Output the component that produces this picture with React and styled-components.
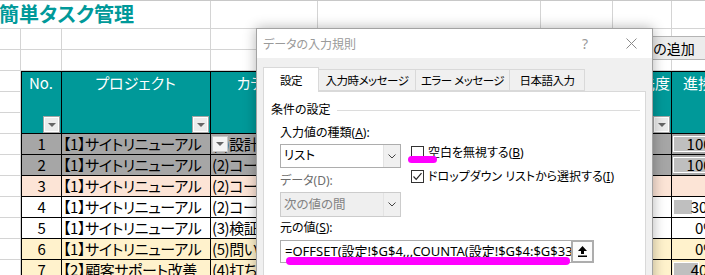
import React from "react";
import styled, { createGlobalStyle } from "styled-components";

const teal = "#009999";
const grid = "#d4d4d4";
const font = `"Noto Sans CJK JP", "Noto Sans", sans-serif`;
const uiFont = `"Noto Sans", "Noto Sans CJK JP", sans-serif`;

const columns = [21, 41, 149, 107, 223, 72, 59, 69];
const headers = ["No.", "プロジェクト", "カテゴリ", "タスク", "担当", "優先度", "進捗率"];

const rows = [
  { no: 1, project: "【1】サイトリニューアル", task: "(1)設計書作成", tone: "done", progress: 100 },
  { no: 2, project: "【1】サイトリニューアル", task: "(2)コーディング", tone: "done", progress: 100 },
  { no: 3, project: "【1】サイトリニューアル", task: "(2)コーディング", tone: "late", progress: null },
  { no: 4, project: "【1】サイトリニューアル", task: "(2)コーディング", tone: "plain", progress: 30 },
  { no: 5, project: "【1】サイトリニューアル", task: "(3)検証", tone: "plain", progress: 0 },
  { no: 6, project: "【1】サイトリニューアル", task: "(5)問い合わせ対応", tone: "wait", progress: 0 },
  { no: 7, project: "【2】顧客サポート改善", task: "(4)打ち合わせ", tone: "wait", progress: 40 },
];

const toneColor = {
  done: "#a6a6a6",
  late: "#fce4d6",
  plain: "#ffffff",
  wait: "#fff2cc",
};

const GlobalStyle = createGlobalStyle`
  body {
    margin: 0;
    background: #fff;
    overflow: hidden;
  }
`;

const Page = styled.div`
  position: relative;
  width: 705px;
  height: 275px;
  overflow: hidden;
  font-family: ${font};
  font-feature-settings: "palt";
`;

const Sheet = styled.div`
  display: flex;
  flex-direction: column;
  border-top: 1px solid #c8c8c8;
`;

const Row = styled.div`
  display: flex;
  flex: none;
  height: ${(p) => p.h}px;
`;

const GridCell = styled.div`
  flex: none;
  box-sizing: border-box;
  width: ${(p) => p.w}px;
  height: ${(p) => p.h || 21}px;
  border-right: 1px solid ${grid};
  border-bottom: 1px solid ${grid};
`;

const Stack = styled.div`
  display: flex;
  flex-direction: column;
`;

const TitleCell = styled.div`
  flex: none;
  box-sizing: border-box;
  width: 211px;
  height: 28px;
  border-right: 1px solid ${grid};
  border-bottom: 1px solid ${grid};
  color: ${teal};
  font-size: 20px;
  font-weight: 700;
  line-height: 26px;
  white-space: nowrap;
  overflow: hidden;
  text-indent: -1px;
`;

const HeadCell = styled.div`
  flex: none;
  box-sizing: border-box;
  width: ${(p) => p.w}px;
  height: 63px;
  display: flex;
  flex-direction: column;
  padding: 1px 1px 0 0;
  background: ${teal};
  color: #fff;
  font-size: 15px;
  line-height: 20px;
  text-align: ${(p) => p.align || "center"};
  white-space: nowrap;
  overflow: hidden;
  border-top: 1px solid #000;
  border-right: 1px solid #000;
  border-bottom: 1px solid #000;
  border-left: ${(p) => (p.first ? "1px solid #000" : "none")};
`;

const FilterButton = styled.span`
  margin-top: auto;
  align-self: flex-end;
  box-sizing: border-box;
  width: 17px;
  height: 17px;
  display: flex;
  align-items: center;
  justify-content: center;
  background: #ececec;
  border: 1px solid #a5a5a5;
  box-shadow: inset 0 0 0 1px #fff;
`;

const Caret = styled.span`
  width: 0;
  height: 0;
  border-left: 4px solid transparent;
  border-right: 4px solid transparent;
  border-top: 4px solid #666;
`;

const DataCell = styled.div`
  flex: none;
  position: relative;
  box-sizing: border-box;
  width: ${(p) => p.w}px;
  height: 21px;
  padding: 0 1px;
  background: ${(p) => p.bg};
  border-right: 1px solid #000;
  border-bottom: 1px solid #000;
  border-left: ${(p) => (p.first ? "1px solid #000" : "none")};
  color: #000;
  font-size: 15px;
  letter-spacing: -0.4px;
  line-height: 20px;
  text-align: ${(p) => p.align || "left"};
  white-space: nowrap;
  overflow: hidden;
`;

const ListButton = styled.span`
  position: absolute;
  left: 1px;
  top: 2px;
  box-sizing: border-box;
  width: 16px;
  height: 16px;
  display: flex;
  align-items: center;
  justify-content: center;
  background: #f4f4f4;
  border: 1px solid #c6c6c6;
`;

const Bar = styled.span`
  position: absolute;
  left: 1px;
  top: 2px;
  height: 16px;
  box-sizing: border-box;
  background: #bfbfbf;
  border: 1px solid #fff;
`;

const BarText = styled.span`
  position: relative;
  letter-spacing: 0;
`;

const ShapeButton = styled.div`
  position: absolute;
  left: 614px;
  top: 36px;
  box-sizing: border-box;
  width: 100px;
  height: 24px;
  display: flex;
  align-items: center;
  justify-content: center;
  padding-left: 6px;
  background: #ececec;
  border: 1px solid #b4b4b4;
  font-size: 14px;
  color: #000;
`;

/* dialog */

const Dialog = styled.div`
  position: absolute;
  left: 256px;
  top: 28px;
  box-sizing: border-box;
  width: 397px;
  height: 270px;
  background: #f0f0f0;
  border: 1px solid #a3a3a3;
  box-shadow: 0 0 12px rgba(0, 0, 0, 0.3);
  font-family: ${uiFont};
  font-size: 12px;
  color: #000;
`;

const TitleBar = styled.div`
  display: flex;
  align-items: center;
  height: 29px;
  padding-left: 6px;
  background: #fff;
  color: #9a9a9a;
`;

const TitleText = styled.span`
  flex: 1;
  font-size: 12px;
`;

const WinButton = styled.span`
  width: ${(p) => p.w}px;
  height: 29px;
  display: flex;
  align-items: center;
  justify-content: center;
  color: #9a9a9a;
  font-size: 14px;
`;

const Body = styled.div`
  padding: 9px 6px 0 6px;
`;

const Tabs = styled.div`
  position: relative;
  z-index: 1;
  display: flex;
  align-items: flex-end;
  height: 24px;
`;

const Tab = styled.div`
  box-sizing: border-box;
  width: ${(p) => p.w}px;
  height: ${(p) => (p.active ? 25 : 22)}px;
  margin-left: ${(p) => (p.first ? 0 : -1)}px;
  margin-bottom: ${(p) => (p.active ? -1 : 0)}px;
  display: flex;
  align-items: center;
  justify-content: center;
  background: ${(p) => (p.active ? "#fff" : "#f0f0f0")};
  border: 1px solid #d9d9d9;
  border-bottom: ${(p) => (p.active ? "none" : "1px solid #d9d9d9")};
  font-size: 11.5px;
  letter-spacing: -0.5px;
  white-space: nowrap;
`;

const Panel = styled.div`
  box-sizing: border-box;
  height: 200px;
  padding: 9px 0 0 7px;
  background: #fff;
  border: 1px solid #d9d9d9;
`;

const SectionHead = styled.div`
  display: flex;
  align-items: center;
  gap: 6px;
  line-height: 18px;
  padding-right: 5px;
`;

const Rule = styled.span`
  flex: 1;
  height: 1px;
  background: #dcdcdc;
`;

const Fields = styled.div`
  padding-left: 9px;
`;

const FieldLabel = styled.div`
  line-height: 18px;
  margin-top: ${(p) => p.gap}px;
  color: ${(p) => (p.disabled ? "#6d6d6d" : "#000")};
`;

const TopRow = styled.div`
  display: flex;
  gap: 10px;
  margin-top: 2px;
`;

const LeftColumn = styled.div`
  width: 121px;
`;

const Select = styled.div`
  box-sizing: border-box;
  display: flex;
  height: ${(p) => (p.disabled ? 25 : 24)}px;
  margin-top: ${(p) => p.gap || 0}px;
  background: ${(p) => (p.disabled ? "#efefef" : "#fff")};
  border: 1px solid ${(p) => (p.disabled ? "#cccccc" : "#adadad")};
  color: ${(p) => (p.disabled ? "#838383" : "#000")};
`;

const SelectValue = styled.span`
  flex: 1;
  padding-left: 3px;
  line-height: ${(p) => (p.disabled ? 23 : 22)}px;
  font-size: 12.5px;
`;

const SelectArrow = styled.span`
  width: 16px;
  display: flex;
  align-items: center;
  justify-content: center;
  background: #f0f0f0;
  border-left: 1px solid #e3e3e3;
`;

const Checks = styled.div`
  display: flex;
  flex-direction: column;
  gap: 8px;
`;

const CheckRow = styled.label`
  position: relative;
  display: flex;
  align-items: center;
  gap: 4px;
  height: 16px;
  white-space: nowrap;
`;

const Box = styled.span`
  box-sizing: border-box;
  width: 13px;
  height: 13px;
  display: flex;
  align-items: center;
  justify-content: center;
  background: #fff;
  border: 1px solid #333;
`;

const Marker = styled.span`
  position: absolute;
  left: ${(p) => p.x}px;
  top: ${(p) => p.y}px;
  width: ${(p) => p.w}px;
  height: ${(p) => p.h}px;
  border-radius: 4px;
  background: #ff00ff;
`;

const SourceRow = styled.div`
  position: relative;
  display: flex;
  margin-top: 3px;
  width: 314px;
`;

const TextBox = styled.div`
  box-sizing: border-box;
  width: 292px;
  height: 23px;
  padding-left: 4px;
  background: #fff;
  border: 1px solid #adadad;
  font-size: 13px;
  line-height: 21px;
  white-space: nowrap;
  overflow: hidden;
`;

const RangeButton = styled.span`
  box-sizing: border-box;
  width: 22px;
  height: 23px;
  display: flex;
  align-items: center;
  justify-content: center;
  background: #fbfbfb;
  border: 2px solid #adadad;
  border-left-width: 1px;
`;

const Chevron = () => (
  <svg width="8" height="5" viewBox="0 0 8 5">
    <polyline points="0.5,0.5 4,4 7.5,0.5" fill="none" stroke="#444" strokeWidth="1" />
  </svg>
);

const CloseIcon = () => (
  <svg width="11" height="11" viewBox="0 0 11 11">
    <path d="M0.5 0.5 L10.5 10.5 M10.5 0.5 L0.5 10.5" stroke="#8a8a8a" strokeWidth="1" />
  </svg>
);

const CheckMark = () => (
  <svg width="11" height="11" viewBox="0 0 11 11">
    <polyline points="1.5,5.5 4.2,8.3 9.5,2.2" fill="none" stroke="#222" strokeWidth="1.2" />
  </svg>
);

const UploadIcon = () => (
  <svg width="11" height="13" viewBox="0 0 11 13">
    <path d="M5.5 1 L10 6 L7 6 L7 9 L4 9 L4 6 L1 6 Z" fill="#000" />
    <rect x="1" y="10.5" width="9" height="1.5" fill="#000" />
  </svg>
);

const ProgressCell = ({ w, bg, value }) => (
  <DataCell w={w} bg={bg} align="center">
    {value > 0 && <Bar style={{ width: `${Math.round(value * 0.66)}px` }} />}
    {value !== null && <BarText>{value}%</BarText>}
  </DataCell>
);

const App = () => {
  const [colA, ...tableCols] = columns;
  return (
    <Page>
      <GlobalStyle />
      <Sheet>
        <Row h={28}>
          <TitleCell>簡単タスク管理</TitleCell>
          {columns.slice(3).map((w, i) => (
            <GridCell key={i} w={w} h={28} />
          ))}
        </Row>
        {[0, 1].map((r) => (
          <Row h={21} key={r}>
            {columns.map((w, i) => (
              <GridCell key={i} w={w} />
            ))}
          </Row>
        ))}
        <Row h={63}>
          <Stack>
            <GridCell w={colA} />
            <GridCell w={colA} />
            <GridCell w={colA} />
          </Stack>
          {tableCols.map((w, i) => (
            <HeadCell key={i} w={w} first={i === 0} align={i === 5 ? "right" : "center"}>
              {headers[i]}
              <FilterButton>
                <Caret />
              </FilterButton>
            </HeadCell>
          ))}
        </Row>
        {rows.map((r) => {
          const bg = toneColor[r.tone];
          return (
            <Row h={21} key={r.no}>
              <GridCell w={colA} />
              <DataCell w={tableCols[0]} bg={bg} first align="center">
                {r.no}
              </DataCell>
              <DataCell w={tableCols[1]} bg={bg}>
                {r.project}
              </DataCell>
              <DataCell w={tableCols[2]} bg={bg}>
                {r.task}
                {r.no === 1 && (
                  <ListButton>
                    <Caret />
                  </ListButton>
                )}
              </DataCell>
              <DataCell w={tableCols[3]} bg={bg} />
              <DataCell w={tableCols[4]} bg={bg} />
              <DataCell w={tableCols[5]} bg={bg} />
              <ProgressCell w={tableCols[6]} bg={bg} value={r.progress} />
            </Row>
          );
        })}
      </Sheet>

      <ShapeButton>行の追加</ShapeButton>

      <Dialog>
        <TitleBar>
          <TitleText>データの入力規則</TitleText>
          <WinButton w={50}>?</WinButton>
          <WinButton w={42}>
            <CloseIcon />
          </WinButton>
        </TitleBar>
        <Body>
          <Tabs>
            <Tab w={56} first active>
              設定
            </Tab>
            <Tab w={98}>入力時メッセージ</Tab>
            <Tab w={95}>エラー メッセージ</Tab>
            <Tab w={76}>日本語入力</Tab>
          </Tabs>
          <Panel>
            <SectionHead>
              条件の設定
              <Rule />
            </SectionHead>
            <Fields>
              <FieldLabel gap={5}>
                入力値の種類(<u>A</u>):
              </FieldLabel>
              <TopRow>
                <LeftColumn>
                  <Select>
                    <SelectValue>リスト</SelectValue>
                    <SelectArrow>
                      <Chevron />
                    </SelectArrow>
                  </Select>
                  <FieldLabel gap={4} disabled>
                    データ(D):
                  </FieldLabel>
                  <Select gap={2} disabled>
                    <SelectValue disabled>次の値の間</SelectValue>
                    <SelectArrow>
                      <Chevron />
                    </SelectArrow>
                  </Select>
                </LeftColumn>
                <Checks>
                  <CheckRow>
                    <Box />
                    <span>
                      空白を無視する(<u>B</u>)
                    </span>
                    <Marker x={-3} y={12} w={29} h={7} />
                  </CheckRow>
                  <CheckRow>
                    <Box>
                      <CheckMark />
                    </Box>
                    <span>
                      ドロップダウン リストから選択する(<u>I</u>)
                    </span>
                  </CheckRow>
                </Checks>
              </TopRow>
              <FieldLabel gap={2}>
                元の値(<u>S</u>):
              </FieldLabel>
              <SourceRow>
                <TextBox>=OFFSET(設定!$G$4,,,COUNTA(設定!$G$4:$G$33)</TextBox>
                <RangeButton>
                  <UploadIcon />
                </RangeButton>
                <Marker x={6} y={17} w={284} h={8} />
              </SourceRow>
            </Fields>
          </Panel>
        </Body>
      </Dialog>
    </Page>
  );
};

export default App;
